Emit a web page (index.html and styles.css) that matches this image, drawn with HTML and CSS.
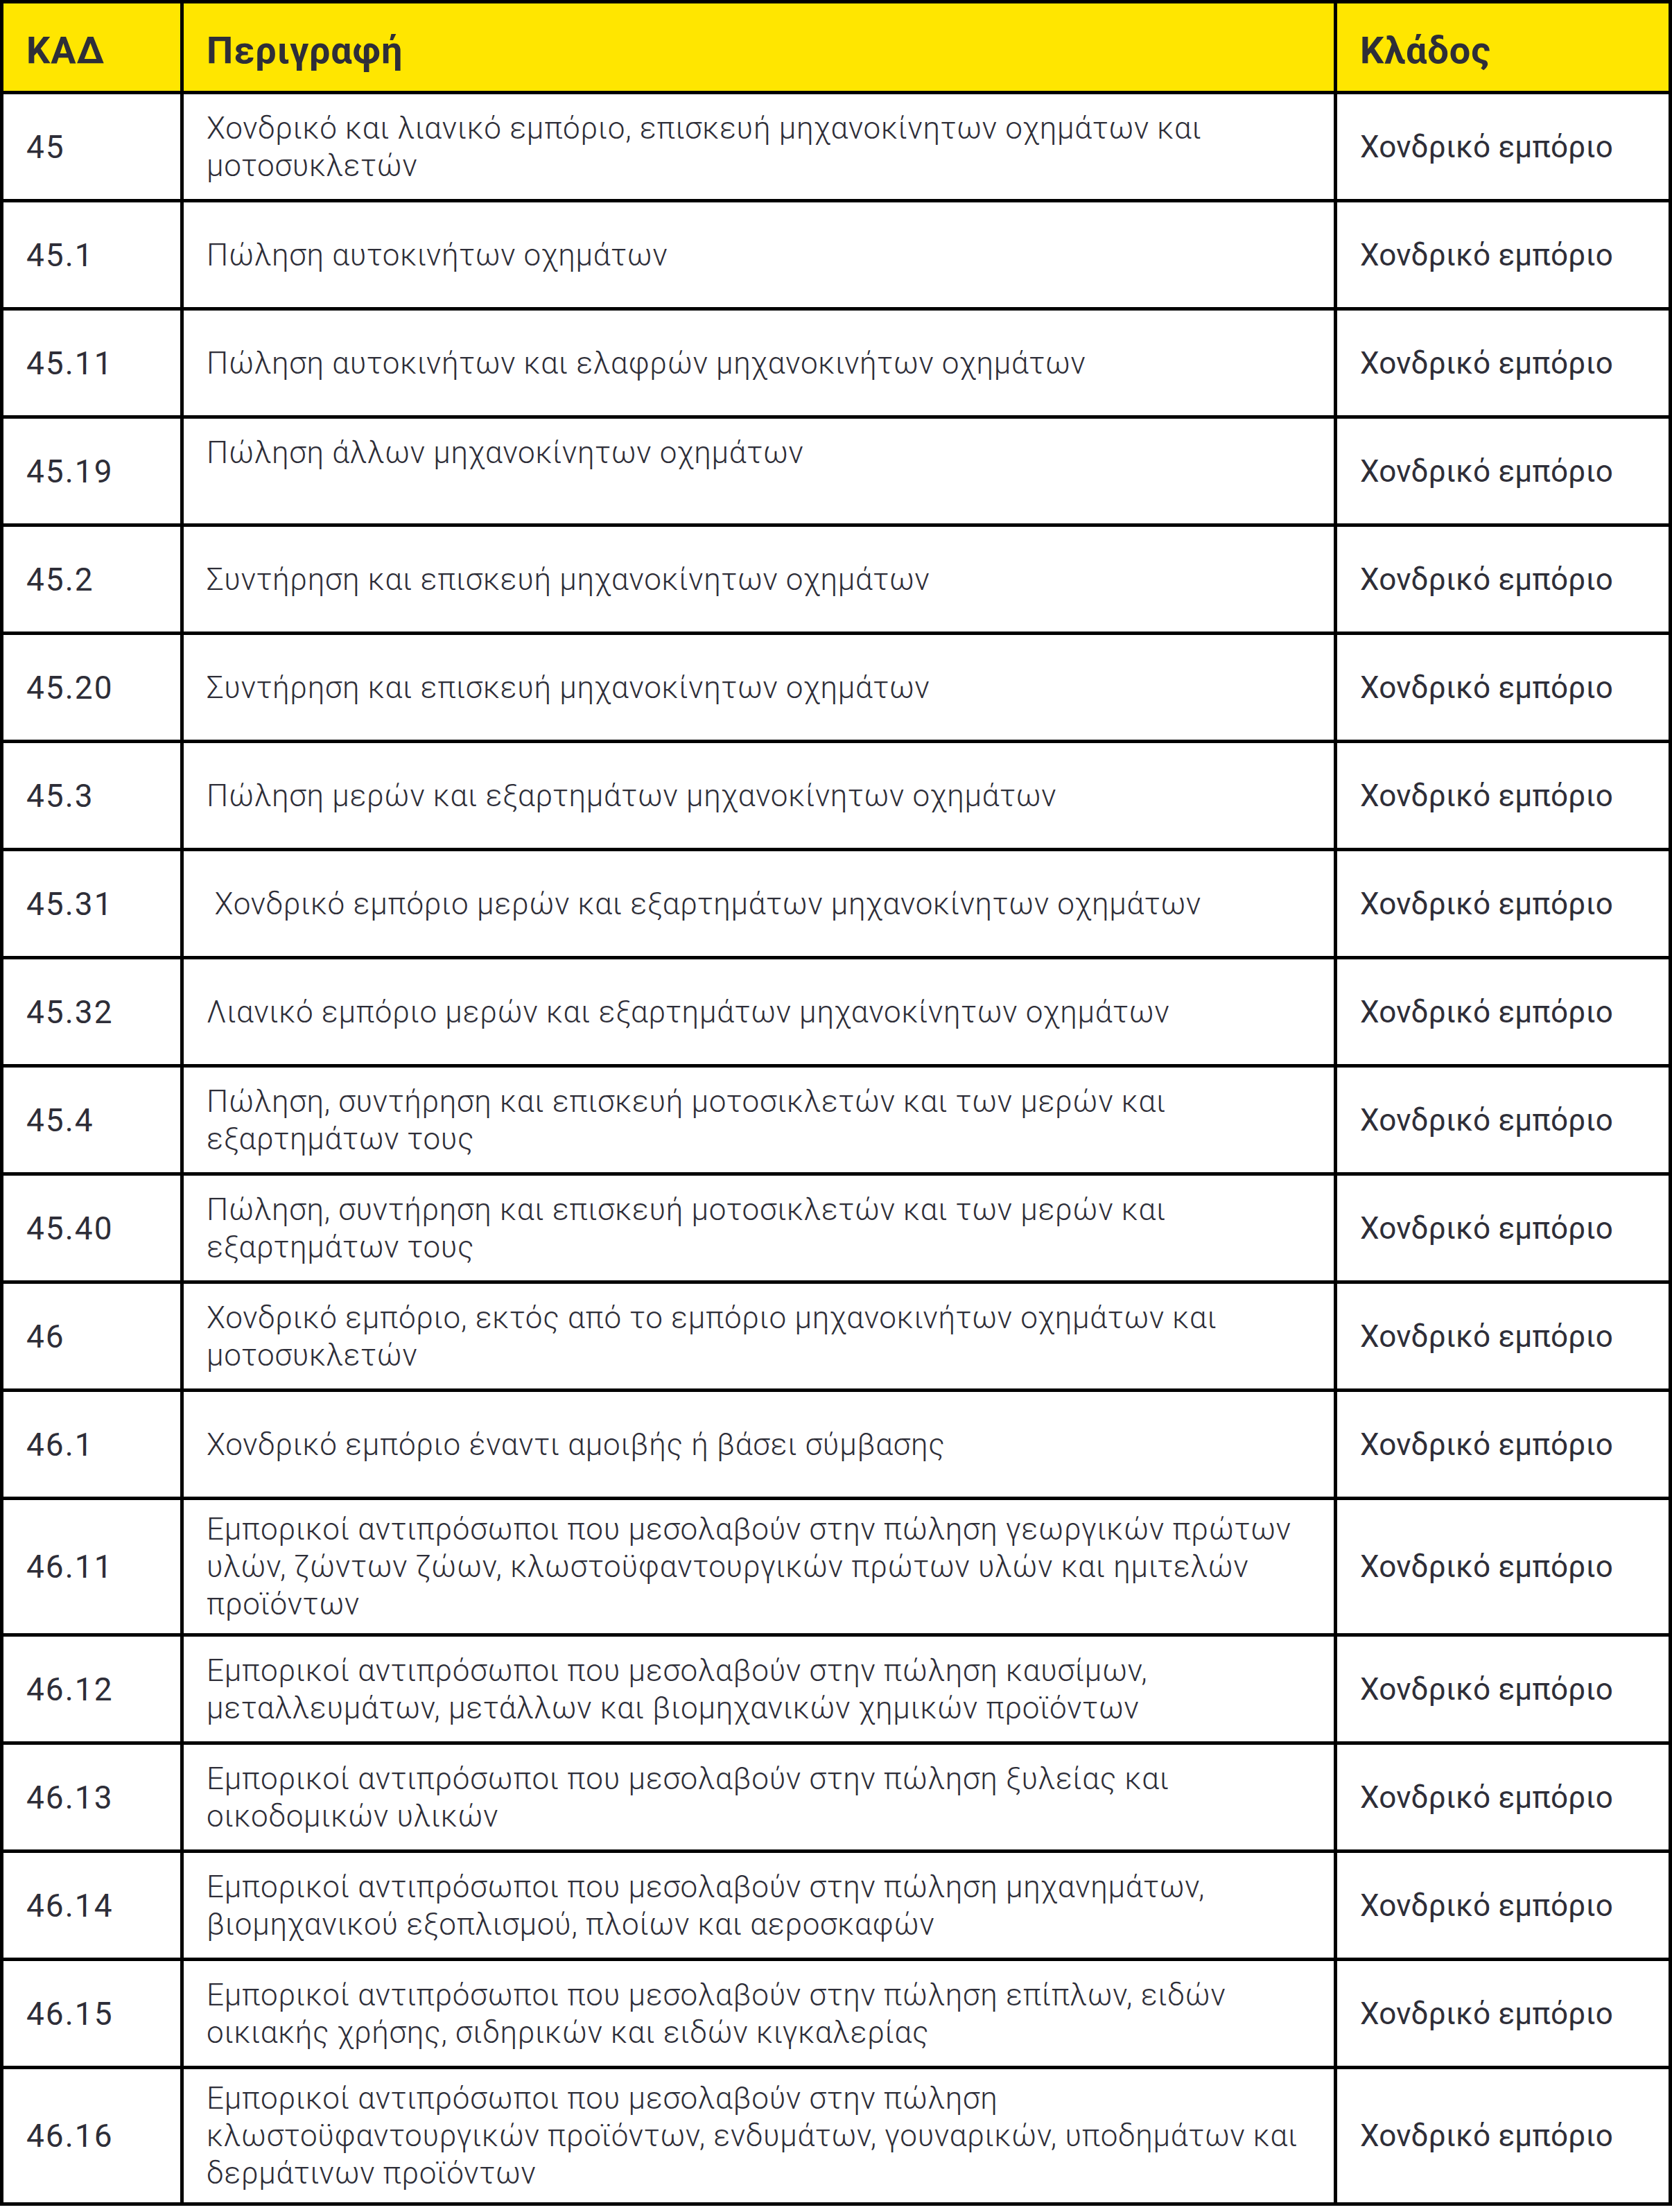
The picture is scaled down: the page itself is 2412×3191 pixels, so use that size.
FILE: index.html
```html
<!DOCTYPE html>
<html lang="el">
<head>
  <meta charset="UTF-8" />
  <meta name="viewport" content="width=device-width, initial-scale=1.0" />
  <title>ΚΑΔ - Χονδρικό εμπόριο</title>
  <link rel="stylesheet" href="styles.css">
</head>
<body>
  <table class="kad-table">
    <thead>
      <tr>
        <th class="col-code">ΚΑΔ</th>
        <th class="col-desc">Περιγραφή</th>
        <th class="col-branch">Κλάδος</th>
      </tr>
    </thead>
    <tbody>
      <tr>
        <td class="code">45</td>
        <td class="desc">Χονδρικό και λιανικό εμπόριο, επισκευή μηχανοκίνητων οχημάτων και<br>μοτοσυκλετών</td>
        <td class="branch">Χονδρικό εμπόριο</td>
      </tr>
      <tr>
        <td class="code">45.1</td>
        <td class="desc">Πώληση αυτοκινήτων οχημάτων</td>
        <td class="branch">Χονδρικό εμπόριο</td>
      </tr>
      <tr>
        <td class="code">45.11</td>
        <td class="desc">Πώληση αυτοκινήτων και ελαφρών μηχανοκινήτων οχημάτων</td>
        <td class="branch">Χονδρικό εμπόριο</td>
      </tr>
      <tr>
        <td class="code">45.19</td>
        <td class="desc">Πώληση άλλων μηχανοκίνητων οχημάτων<br>&nbsp;</td>
        <td class="branch">Χονδρικό εμπόριο</td>
      </tr>
      <tr>
        <td class="code">45.2</td>
        <td class="desc">Συντήρηση και επισκευή μηχανοκίνητων οχημάτων</td>
        <td class="branch">Χονδρικό εμπόριο</td>
      </tr>
      <tr>
        <td class="code">45.20</td>
        <td class="desc">Συντήρηση και επισκευή μηχανοκίνητων οχημάτων</td>
        <td class="branch">Χονδρικό εμπόριο</td>
      </tr>
      <tr>
        <td class="code">45.3</td>
        <td class="desc">Πώληση μερών και εξαρτημάτων μηχανοκίνητων οχημάτων</td>
        <td class="branch">Χονδρικό εμπόριο</td>
      </tr>
      <tr>
        <td class="code">45.31</td>
        <td class="desc">&nbsp;Χονδρικό εμπόριο μερών και εξαρτημάτων μηχανοκίνητων οχημάτων</td>
        <td class="branch">Χονδρικό εμπόριο</td>
      </tr>
      <tr>
        <td class="code">45.32</td>
        <td class="desc">Λιανικό εμπόριο μερών και εξαρτημάτων μηχανοκίνητων οχημάτων</td>
        <td class="branch">Χονδρικό εμπόριο</td>
      </tr>
      <tr>
        <td class="code">45.4</td>
        <td class="desc">Πώληση, συντήρηση και επισκευή μοτοσικλετών και των μερών και<br>εξαρτημάτων τους</td>
        <td class="branch">Χονδρικό εμπόριο</td>
      </tr>
      <tr>
        <td class="code">45.40</td>
        <td class="desc">Πώληση, συντήρηση και επισκευή μοτοσικλετών και των μερών και<br>εξαρτημάτων τους</td>
        <td class="branch">Χονδρικό εμπόριο</td>
      </tr>
      <tr>
        <td class="code">46</td>
        <td class="desc">Χονδρικό εμπόριο, εκτός από το εμπόριο μηχανοκινήτων οχημάτων και<br>μοτοσυκλετών</td>
        <td class="branch">Χονδρικό εμπόριο</td>
      </tr>
      <tr>
        <td class="code">46.1</td>
        <td class="desc">Χονδρικό εμπόριο έναντι αμοιβής ή βάσει σύμβασης</td>
        <td class="branch">Χονδρικό εμπόριο</td>
      </tr>
      <tr>
        <td class="code">46.11</td>
        <td class="desc">Εμπορικοί αντιπρόσωποι που μεσολαβούν στην πώληση γεωργικών πρώτων<br>υλών, ζώντων ζώων, κλωστοϋφαντουργικών πρώτων υλών και ημιτελών<br>προϊόντων</td>
        <td class="branch">Χονδρικό εμπόριο</td>
      </tr>
      <tr>
        <td class="code">46.12</td>
        <td class="desc">Εμπορικοί αντιπρόσωποι που μεσολαβούν στην πώληση καυσίμων,<br>μεταλλευμάτων, μετάλλων και βιομηχανικών χημικών προϊόντων</td>
        <td class="branch">Χονδρικό εμπόριο</td>
      </tr>
      <tr>
        <td class="code">46.13</td>
        <td class="desc">Εμπορικοί αντιπρόσωποι που μεσολαβούν στην πώληση ξυλείας και<br>οικοδομικών υλικών</td>
        <td class="branch">Χονδρικό εμπόριο</td>
      </tr>
      <tr>
        <td class="code">46.14</td>
        <td class="desc">Εμπορικοί αντιπρόσωποι που μεσολαβούν στην πώληση μηχανημάτων,<br>βιομηχανικού εξοπλισμού, πλοίων και αεροσκαφών</td>
        <td class="branch">Χονδρικό εμπόριο</td>
      </tr>
      <tr>
        <td class="code">46.15</td>
        <td class="desc">Εμπορικοί αντιπρόσωποι που μεσολαβούν στην πώληση επίπλων, ειδών<br>οικιακής χρήσης, σιδηρικών και ειδών κιγκαλερίας</td>
        <td class="branch">Χονδρικό εμπόριο</td>
      </tr>
      <tr>
        <td class="code">46.16</td>
        <td class="desc">Εμπορικοί αντιπρόσωποι που μεσολαβούν στην πώληση<br>κλωστοϋφαντουργικών προϊόντων, ενδυμάτων, γουναρικών, υποδημάτων και<br>δερμάτινων προϊόντων</td>
        <td class="branch">Χονδρικό εμπόριο</td>
      </tr>
    </tbody>
  </table>
</body>
</html>
```

FILE: styles.css
```css
body, html {
  margin: 0;
  padding: 0;
  background: #fff;
  color: #2e2e38;
  font-family: Roboto, "Noto Sans", sans-serif;
}
.kad-table {
  width: 2412px;
  border-collapse: separate;
  border-spacing: 5px;
  background: #000;
}
.kad-table th,
.kad-table td {
  padding: 15px 33px;
  text-align: left;
  vertical-align: middle;
}
.kad-table th {
  background: #ffe600;
  height: 96px;
  padding-top: 19px;
  padding-bottom: 11px;
  font-size: 54px;
  font-weight: 700;
  letter-spacing: 1px;
}
.kad-table td {
  background: #fff;
  height: 121px;
}
.col-code { width: 189px; }
.col-branch { width: 412px; }
.code {
  font-size: 46px;
  letter-spacing: 2px;
}
.desc {
  font-size: 44px;
  font-weight: 300;
  line-height: 54px;
  letter-spacing: 0.75px;
}
.branch {
  font-size: 44px;
  letter-spacing: 0.2px;
}
```
